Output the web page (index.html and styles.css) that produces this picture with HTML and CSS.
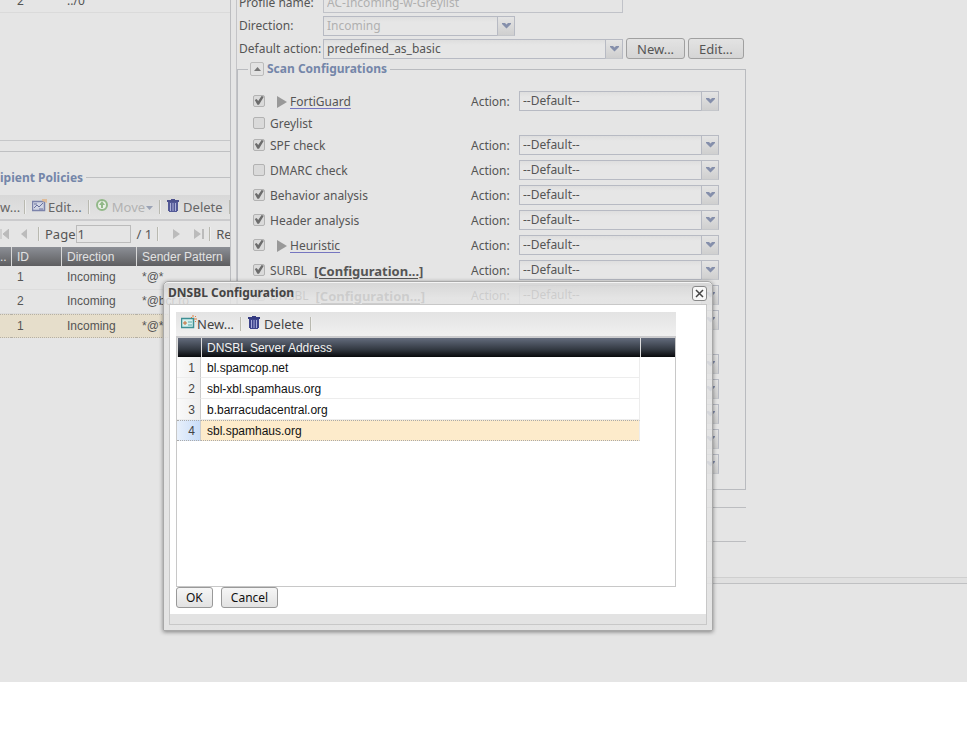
FILE: index.html
```html
<!DOCTYPE html>
<html lang="en">
<head>
  <meta charset="UTF-8">
  <meta name="viewport" content="width=device-width, initial-scale=1.0">
  <title>DNSBL Configuration</title>
  <link rel="stylesheet" href="styles.css">
</head>
<body>
  <svg width="0" height="0" class="sprite" aria-hidden="true">
    <symbol id="arrow" viewBox="0 0 9 6"><path d="M0 0h3l1.500 1.500L6 0h3v1L4.500 5.500 0 1z" fill="#858fab"/></symbol>
    <symbol id="trash" viewBox="0 0 12 13">
      <path d="M4 0h4v1h4v2H0V1h4z" fill="#343a80"/>
      <path d="M1 3h10v9H10v1H2v-1H1z" fill="#3c438b"/>
      <path d="M3.500 4v8M6 4v8M8.500 4v8" stroke="#a4a9d8"/>
    </symbol>
    <symbol id="card" viewBox="0 0 16 14">
      <rect x="0.500" y="3.500" width="12" height="9" fill="#d5f1ef" stroke="#3d8f93" stroke-width="1.500"/>
      <path d="M2 8h4M4 6v4" stroke="#c66a35"/>
      <path d="M7 7h4M7 10h4" stroke="#5aa7a8"/>
      <path d="M10 2l1 1M12 0v2M15 1l-1 1M13 4h3M14 6l1 1" stroke="#e08040"/>
    </symbol>
    <symbol id="edit" viewBox="0 0 16 14">
      <rect x="0.500" y="3.500" width="12" height="9" fill="#cfd4e6" stroke="#6b74a3" stroke-width="1.500"/>
      <path d="M2 10l3-3 2 2 4-4M2 6h3M7 11h4" stroke="#555f93" fill="none"/>
      <path d="M10 1h5v4l-2-1-3-1z" fill="#e2b78d"/>
    </symbol>
  </svg>

  <div class="app">
    <div class="policies">
      <div class="ip-list">
        <span>2</span><span>::/0</span>
      </div>
      <div class="ip-end"></div>

      <div class="recipient">
        <div class="section-title">ipient Policies</div>
        <div class="toolbar">
          <button class="tool cut">w...</button>
          <i class="sep"></i>
          <button class="tool"><svg width="16" height="14"><use href="#edit"/></svg>Edit...</button>
          <i class="sep"></i>
          <button class="tool move" disabled>
            <svg width="12" height="12" viewBox="0 0 12 12"><circle cx="6" cy="6" r="5" fill="#edf3e9" stroke="#86b37b" stroke-width="2"/><path d="M6 2l3 4H7v3H5V6H3z" fill="#86b37b"/></svg>
            Move<svg class="tiny" width="7" height="4"><path d="M0 0h7L3.500 4z" fill="#8f98ae"/></svg>
          </button>
          <i class="sep"></i>
          <button class="tool trash"><svg width="12" height="13"><use href="#trash"/></svg>Delete</button>
          <i class="sep"></i>
        </div>
        <div class="pager">
          <svg width="9" height="10"><path d="M1 0v10M9 0v10L3 5z" fill="#bbb" stroke="#bbb"/></svg>
          <svg class="prev" width="6" height="10"><path d="M6 0v10L0 5z" fill="#bbb"/></svg>
          <i class="sep"></i>
          <label for="page">Page</label>
          <input id="page" type="text" value="1">
          <span class="total">/ 1</span>
          <i class="sep"></i>
          <svg class="next" width="7" height="10"><path d="M0 0v10l7-5z" fill="#bbb"/></svg>
          <svg class="last" width="10" height="10"><path d="M0 0v10l7-5zM8 0h2v10H8z" fill="#bbb"/></svg>
          <i class="sep"></i>
          <span>Rec</span>
        </div>
        <table class="policy-table">
          <tr><th class="col-dots">..</th><th class="col-id">ID</th><th class="col-dir">Direction</th><th>Sender Pattern</th></tr>
          <tr><td></td><td>1</td><td>Incoming</td><td>*@*</td></tr>
          <tr><td></td><td>2</td><td>Incoming</td><td>*@bcr.ro</td></tr>
          <tr class="selected"><td></td><td>1</td><td>Incoming</td><td>*@*</td></tr>
        </table>
      </div>
    </div>

    <div class="profile">
      <form class="profile-form">
        <div class="field">
          <label for="name">Profile name:</label>
          <input id="name" class="text" type="text" value="AC-Incoming-w-Greylist" disabled>
        </div>
        <div class="field">
          <label for="direction">Direction:</label>
          <div class="combo small"><select id="direction" disabled><option>Incoming</option></select><span class="trigger"><svg width="9" height="6"><use href="#arrow"/></svg></span></div>
        </div>
        <div class="field">
          <label for="action">Default action:</label>
          <div class="combo wide"><select id="action"><option>predefined_as_basic</option></select><span class="trigger"><svg width="9" height="6"><use href="#arrow"/></svg></span></div>
          <button type="button" class="btn">New...</button>
          <button type="button" class="btn">Edit...</button>
        </div>

        <fieldset class="scan">
          <legend><button type="button" class="toggle" aria-label="Collapse"><svg width="7" height="4"><path d="M0 4h7L3.500 0z" fill="#777"/></svg></button>Scan Configurations</legend>

          <div class="scan-row">
            <div class="check"><input id="c1" type="checkbox" aria-label="FortiGuard" checked><svg class="expand" width="10" height="12"><path d="M0 0v12l10-6z" fill="#999"/></svg><a href="#">FortiGuard</a></div>
            <label for="a1">Action:</label>
            <div class="combo"><select id="a1"><option>--Default--</option></select><span class="trigger"><svg width="9" height="6"><use href="#arrow"/></svg></span></div>
          </div>
          <div class="scan-row short">
            <div class="check"><input id="c2" type="checkbox"><label for="c2">Greylist</label></div>
          </div>
          <div class="scan-row">
            <div class="check"><input id="c3" type="checkbox" checked><label for="c3">SPF check</label></div>
            <label for="a3">Action:</label>
            <div class="combo"><select id="a3"><option>--Default--</option></select><span class="trigger"><svg width="9" height="6"><use href="#arrow"/></svg></span></div>
          </div>
          <div class="scan-row">
            <div class="check"><input id="c4" type="checkbox"><label for="c4">DMARC check</label></div>
            <label for="a4">Action:</label>
            <div class="combo"><select id="a4"><option>--Default--</option></select><span class="trigger"><svg width="9" height="6"><use href="#arrow"/></svg></span></div>
          </div>
          <div class="scan-row">
            <div class="check"><input id="c5" type="checkbox" checked><label for="c5">Behavior analysis</label></div>
            <label for="a5">Action:</label>
            <div class="combo"><select id="a5"><option>--Default--</option></select><span class="trigger"><svg width="9" height="6"><use href="#arrow"/></svg></span></div>
          </div>
          <div class="scan-row">
            <div class="check"><input id="c6" type="checkbox" checked><label for="c6">Header analysis</label></div>
            <label for="a6">Action:</label>
            <div class="combo"><select id="a6"><option>--Default--</option></select><span class="trigger"><svg width="9" height="6"><use href="#arrow"/></svg></span></div>
          </div>
          <div class="scan-row">
            <div class="check"><input id="c7" type="checkbox" aria-label="Heuristic" checked><svg class="expand" width="10" height="12"><path d="M0 0v12l10-6z" fill="#999"/></svg><a href="#">Heuristic</a></div>
            <label for="a7">Action:</label>
            <div class="combo"><select id="a7"><option>--Default--</option></select><span class="trigger"><svg width="9" height="6"><use href="#arrow"/></svg></span></div>
          </div>
          <div class="scan-row">
            <div class="check"><input id="c8" type="checkbox" checked><label for="c8">SURBL</label><a class="config" href="#">[Configuration...]</a></div>
            <label for="a8">Action:</label>
            <div class="combo"><select id="a8"><option>--Default--</option></select><span class="trigger"><svg width="9" height="6"><use href="#arrow"/></svg></span></div>
          </div>
          <div class="scan-row">
            <div class="check"><input id="c9" type="checkbox" checked><label for="c9">DNSBL</label><a class="config" href="#">[Configuration...]</a></div>
            <label for="a9">Action:</label>
            <div class="combo"><select id="a9"><option>--Default--</option></select><span class="trigger"><svg width="9" height="6"><use href="#arrow"/></svg></span></div>
          </div>
          <div class="scan-row">
            <div class="combo"><select aria-label="Action"></select><span class="trigger"><svg width="9" height="6"><use href="#arrow"/></svg></span></div>
          </div>
          <div class="scan-row short"></div>
          <div class="scan-row">
            <div class="combo"><select aria-label="Action"></select><span class="trigger"><svg width="9" height="6"><use href="#arrow"/></svg></span></div>
          </div>
          <div class="scan-row">
            <div class="combo"><select aria-label="Action"></select><span class="trigger"><svg width="9" height="6"><use href="#arrow"/></svg></span></div>
          </div>
          <div class="scan-row">
            <div class="combo"><select aria-label="Action"></select><span class="trigger"><svg width="9" height="6"><use href="#arrow"/></svg></span></div>
          </div>
          <div class="scan-row">
            <div class="combo"><select aria-label="Action"></select><span class="trigger"><svg width="9" height="6"><use href="#arrow"/></svg></span></div>
          </div>
          <div class="scan-row">
            <div class="combo"><select aria-label="Action"></select><span class="trigger"><svg width="9" height="6"><use href="#arrow"/></svg></span></div>
          </div>
        </fieldset>
        <div class="collapsed"></div>
        <div class="collapsed last"></div>
      </form>
      <div class="splitter"></div>
    </div>

    <div class="dialog" role="dialog" aria-labelledby="dialog-title">
      <div class="dialog-head">
        <span id="dialog-title">DNSBL Configuration</span>
        <button class="close" aria-label="Close"><svg width="9" height="9"><path d="M1 1l7 7M8 1L1 8" stroke="#444" stroke-width="1.500"/></svg></button>
      </div>
      <div class="dialog-body">
        <div class="dialog-content">
          <div class="grid">
            <div class="toolbar">
              <button class="tool"><svg width="16" height="14"><use href="#card"/></svg>New...</button>
              <i class="sep"></i>
              <button class="tool trash"><svg width="12" height="13"><use href="#trash"/></svg>Delete</button>
              <i class="sep"></i>
            </div>
            <div class="grid-view">
              <table class="server-table">
                <tr><th class="num"></th><th class="address">DNSBL Server Address</th><th></th></tr>
                <tr><td class="num">1</td><td class="address">bl.spamcop.net</td></tr>
                <tr><td class="num">2</td><td class="address">sbl-xbl.spamhaus.org</td></tr>
                <tr><td class="num">3</td><td class="address">b.barracudacentral.org</td></tr>
                <tr class="selected"><td class="num">4</td><td class="address">sbl.spamhaus.org</td></tr>
              </table>
            </div>
          </div>
          <div class="buttons">
            <button class="btn">OK</button>
            <button class="btn">Cancel</button>
          </div>
        </div>
      </div>
    </div>
  </div>
</body>
</html>
```
FILE: styles.css
```css
* {
  box-sizing: border-box;
}

body {
  margin: 0;
  background: #fff;
  font-family: "Noto Sans", Tahoma, sans-serif;
  font-size: 12px;
  line-height: 16px;
  color: #555;
}

button, input, select {
  font: inherit;
  color: inherit;
  margin: 0;
}

svg {
  display: block;
  flex: none;
}

.sprite {
  position: absolute;
}

.app {
  position: relative;
  display: flex;
  align-items: flex-start;
  min-height: 682px;
  background: #e5e5e5;
  overflow: hidden;
}

/* left column */
.policies {
  flex: none;
  width: 231px;
  min-height: 583px;
  border-right: 1px solid #bcbdc0;
  overflow: hidden;
}

.ip-list {
  display: flex;
  height: 141px;
  border-bottom: 1px solid #c6c7c9;
}

.ip-list span {
  width: 50px;
  height: 13px;
  padding-left: 17px;
  line-height: 2px;
  border-bottom: 1px solid #dadada;
}

.ip-list span + span {
  flex: 1;
}

.ip-end {
  height: 11px;
  border-bottom: 1px solid #bfc0c2;
}

.recipient {
  padding-top: 17px;
}

.section-title {
  display: flex;
  align-items: center;
  gap: 3px;
  height: 17px;
  font-weight: bold;
  color: #7486a9;
  margin-bottom: 9px;
  white-space: nowrap;
}

.section-title::after {
  content: "";
  flex: 1;
  border-top: 1px solid #bfc0c2;
}

.toolbar {
  display: flex;
  align-items: center;
  height: 26px;
  background: linear-gradient(#d8d8d8, #e3e3e3);
  border-bottom: 2px solid #cbcbcd;
}

.tool {
  display: flex;
  align-items: center;
  height: 22px;
  padding: 0;
  border: none;
  background: none;
  white-space: nowrap;
  color: #666;
  font-size: 13px;
}

.tool svg {
  margin-bottom: 4px;
}

.tool.trash {
  gap: 4px;
}

.tool.move {
  gap: 4px;
  color: #b2b2b2;
}

.tool .tiny {
  margin: 2px 0 0 -3px;
}

.tool.cut {
  width: 18px;
}

.sep {
  flex: none;
  width: 2px;
  height: 14px;
  margin: 0 6px;
  border-left: 1px solid #b9b9b0;
  border-right: 1px solid #eee;
}

.policies .toolbar svg {
  opacity: 0.85;
}

.pager {
  display: flex;
  align-items: center;
  height: 25px;
  margin-bottom: 1px;
  font-size: 13px;
  white-space: nowrap;
}

.pager .prev {
  margin: 0 6px 0 12px;
}

.pager input {
  width: 55px;
  height: 18px;
  margin-right: 6px;
  padding: 0 1px;
  border: 1px solid #bbb;
  background: #e5e5e5;
}

.pager .next {
  margin: 0 14px 0 9px;
}

.pager .sep {
  margin: 0 5px;
}

.policy-table, .server-table {
  width: 100%;
  border-collapse: separate;
  border-spacing: 0;
  table-layout: fixed;
  font-family: "Liberation Sans", Arial, sans-serif;
  line-height: 15px;
}

.policy-table th, .server-table th {
  padding: 1px 0 0 5px;
  text-align: left;
  font-weight: normal;
  white-space: nowrap;
}

.policy-table th {
  height: 19px;
  background: linear-gradient(#8c8f96, #5e5e60);
  color: #e2e2e2;
  border-left: 1px solid #d8d8d8;
}

.policy-table th:first-child {
  padding: 1px 0 0;
  border: none;
}

.policy-table td {
  height: 24px;
  padding: 0 0 0 6px;
  border-bottom: 1px solid #dcdcdc;
}

.policy-table .selected td {
  background: #e6decb;
  border-top: 1px dotted #b5b0a5;
  border-bottom: 1px dotted #b5b0a5;
}

.col-dots {
  width: 11px;
}

.col-id {
  width: 50px;
}

.col-dir {
  width: 75px;
}

/* right column */
.profile {
  flex: 1;
  min-width: 0;
  padding-left: 5px;
}

.profile-form {
  min-height: 577px;
  border-left: 1px solid #c4c4c7;
  margin-top: -9px;
  padding-bottom: 35px;
}

.field {
  display: flex;
  align-items: center;
  height: 23px;
  padding-left: 2px;
}

.field label {
  width: 84px;
  white-space: nowrap;
}

.text {
  width: 300px;
  height: 20px;
  padding: 0 3px;
  border: 1px solid #c0c2c8;
  background: #e5e5e5;
}

.text:disabled, .small select:disabled {
  color: #b0b0b0;
  opacity: 1;
}

.combo {
  display: flex;
  width: 200px;
}

.combo.small {
  width: 192px;
}

.combo.wide {
  width: 300px;
}

.combo select {
  flex: 1;
  min-width: 0;
  height: 20px;
  padding: 0 3px;
  appearance: none;
  border: 1px solid #b7bac3;
  border-right: none;
  border-radius: 0;
  background: linear-gradient(#dedede, #e6e6e6 5px);
}

.trigger {
  display: flex;
  align-items: center;
  justify-content: center;
  width: 18px;
  height: 20px;
  border: 1px solid #b7bac3;
  border-bottom-color: #c5c7cb;
  background: linear-gradient(#e4e4e4, #cfcfcf);
}

.btn {
  height: 21px;
  padding: 0 9px;
  border: 1px solid #a0a0a0;
  border-radius: 3px;
  background: linear-gradient(#e3e3e3, #d5d5d5);
  line-height: 16px;
}

.field .btn {
  margin-left: 3px;
  padding: 0 10px;
  font-size: 13px;
}

.scan {
  width: 509px;
  margin: 1px 0 0;
  padding: 12px 15px;
  border: 1px solid #b9bbbf;
}

.scan legend {
  display: flex;
  align-items: center;
  gap: 3px;
  height: 16px;
  margin-left: -5px;
  padding: 0 3px 0 2px;
  font-weight: bold;
  color: #7486a9;
}

.toggle {
  display: flex;
  align-items: center;
  justify-content: center;
  width: 14px;
  height: 14px;
  padding: 0;
  border: 1px solid #bbb;
  border-radius: 2px;
  background: #e2e2e2;
}

.scan-row {
  display: grid;
  grid-template-columns: 218px 48px 200px;
  align-items: center;
  height: 25px;
}

.scan-row .combo {
  grid-column: 3;
  margin-bottom: 1px;
}

.scan-row.short {
  height: 19px;
}

.check {
  display: flex;
  align-items: center;
  white-space: nowrap;
}

.check input {
  appearance: none;
  width: 12px;
  height: 12px;
  margin: 0 5px 2px 0;
  border: 1px solid #b2b2b2;
  border-radius: 2px;
  background: #dadada;
}

.check input:checked::before {
  content: "";
  display: block;
  width: 10px;
  height: 10px;
  background: #6c6c6c;
  clip-path: polygon(8% 45%, 26% 35%, 42% 55%, 76% 5%, 98% 12%, 50% 92%, 34% 92%);
}

.check a {
  color: inherit;
  text-decoration-color: #7676c0;
  text-underline-offset: 2px;
}

.check .expand {
  margin: 0 3px 0 7px;
}

.check .config {
  margin-left: 7px;
  font-size: 13px;
  font-weight: bold;
  text-decoration-color: #555;
}

.collapsed {
  width: 509px;
  margin-top: 17px;
  border-top: 1px solid #bcbdc0;
}

.collapsed.last {
  margin-top: 33px;
}

.splitter {
  height: 7px;
  margin-left: -5px;
  border-top: 1px solid #cfcfcf;
  border-bottom: 1px solid #bfc0c2;
  background: #e0e0e0;
}

/* popup window */
.dialog {
  position: absolute;
  left: 163px;
  top: 281px;
  width: 550px;
  padding: 0 5px 5px;
  border: 1px solid #a8a8a8;
  border-radius: 5px 5px 0 0;
  background: linear-gradient(rgba(212, 212, 212, 0.9), rgba(228, 228, 228, 0.84) 16px);
  box-shadow: inset 0 1px #f4f4f4, 0 1px 4px rgba(0, 0, 0, 0.45);
}

.dialog-head {
  display: flex;
  align-items: center;
  justify-content: space-between;
  height: 22px;
  margin-left: -1px;
  font-weight: bold;
  color: #444;
}

.close {
  display: flex;
  align-items: center;
  justify-content: center;
  width: 15px;
  height: 15px;
  padding: 0;
  border: 1px solid #888;
  border-radius: 3px;
  background: #f8f8f8;
}

.dialog-body {
  padding-bottom: 10px;
  border: 1px solid #c8c8c8;
  background: #e3e3e3;
}

.dialog-content {
  padding: 7px 30px 6px 6px;
  background: #fff;
  color: #111;
}

.dialog .toolbar {
  background: linear-gradient(#e3e3e3, #f0f0f0);
  padding-left: 5px;
}

.dialog .tool {
  color: #444;
}

.dialog .btn {
  border-color: #999;
  background: linear-gradient(#f6f6f6, #e2e2e2);
}

.grid-view {
  min-height: 249px;
  border: 1px solid #c8c8c8;
  border-top: none;
}

.server-table th {
  height: 19px;
  background: linear-gradient(#636b7c, #333942 60%, #08090b);
  color: #f2f2f2;
  border-left: 1px solid #ddd;
}

.server-table td {
  height: 21px;
  padding: 2px 0 0 6px;
  border-bottom: 1px solid #ededed;
}

.server-table .num {
  width: 24px;
}

.server-table td.num {
  padding: 2px 5px 0 0;
  text-align: right;
  color: #444;
  background: linear-gradient(90deg, #fafafa, #eee);
  border-right: 1px solid #ccc;
}

.server-table th.address {
  width: 439px;
}

.server-table td.address {
  border-right: 1px solid #ededed;
}

.server-table .selected td {
  background: #fdebcb;
  border-top: 1px dotted #aaa;
  border-bottom: 1px dotted #aaa;
}

.server-table .selected td.num {
  background: linear-gradient(90deg, #e8f0fb, #c8dcf8);
}

.buttons {
  display: flex;
  gap: 8px;
}
```
